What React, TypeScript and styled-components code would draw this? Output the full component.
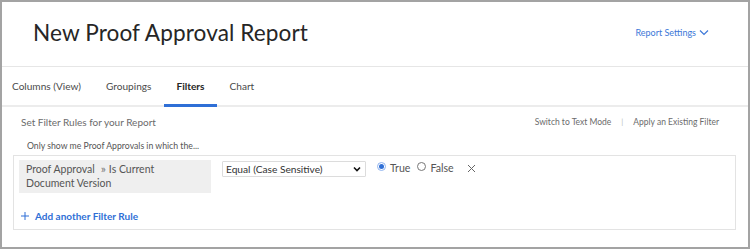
import React from "react";
import styled, { createGlobalStyle } from "styled-components";

const Global = createGlobalStyle`
  html, body { margin: 0; padding: 0; background: #fff; }
  body { font-family: "Lato", "Open Sans", Arial, sans-serif; }
  * { box-sizing: border-box; }
`;

const Frame = styled.div`
  width: 750px;
  height: 249px;
  border: 2px solid #a3a3a3;
  background: #fff;
  display: flex;
  flex-direction: column;
`;

const Header = styled.div`
  height: 65px;
  display: flex;
  align-items: center;
  justify-content: space-between;
  padding: 0 39px 4px 31px;
  border-bottom: 1px solid #e6e6e6;
`;

const Title = styled.h1`
  margin: 0;
  font-size: 22.6px;
  font-weight: 400;
  color: #262626;
  letter-spacing: 0.1px;
`;

const SettingsLink = styled.a`
  display: flex;
  align-items: center;
  gap: 3px;
  font-size: 9px;
  color: #3d78d8;
  cursor: pointer;
`;

const TabBar = styled.div`
  height: 40px;
  display: flex;
  align-items: stretch;
  padding-left: 0;
  border-bottom: 2px solid #ececec;
`;

const Tab = styled.div<{ $active?: boolean }>`
  display: flex;
  align-items: center;
  padding: 0 12.5px;
  margin-bottom: -2px;
  font-size: 10.1px;
  font-weight: ${(p) => (p.$active ? 700 : 400)};
  color: ${(p) => (p.$active ? "#262626" : "#4a4a4a")};
  border-bottom: 3px solid ${(p) => (p.$active ? "#2f6fd6" : "transparent")};
  &:first-child {
    padding-left: 10px;
  }
`;

const Body = styled.div`
  flex: 1;
  display: flex;
  flex-direction: column;
  padding: 7px 12px 0 11px;
`;

const SubHeader = styled.div`
  display: flex;
  justify-content: space-between;
  align-items: center;
  height: 15px;
  padding: 0 17px 0 8px;
`;

const SubTitle = styled.span`
  font-size: 10px;
  color: #6b6b6b;
`;

const Actions = styled.div`
  display: flex;
  align-items: center;
  gap: 10px;
  font-size: 8.5px;
  color: #6b6b6b;
`;

const Sep = styled.span`
  color: #bdbdbd;
  font-size: 8px;
`;

const Hint = styled.div`
  margin: 11px 0 0 14px;
  font-size: 8.7px;
  color: #555;
  height: 12px;
`;

const RuleBox = styled.div`
  margin-top: 3px;
  border: 1px solid #e3e3e3;
  height: 75px;
  padding: 4px 5px 0 5px;
  display: flex;
  flex-direction: column;
`;

const RuleRow = styled.div`
  display: flex;
  align-items: flex-start;
`;

const FieldTag = styled.div`
  width: 192px;
  height: 33px;
  background: #efefef;
  padding: 2px 7px;
  font-size: 10.5px;
  line-height: 14px;
  color: #555;
`;

const Chev = styled.span`
  margin: 0 3px 0 6px;
  color: #777;
  font-size: 12px;
`;

const Select = styled.div`
  margin: 1px 0 0 11px;
  width: 144px;
  height: 16px;
  border: 1px solid #dcdcdc;
  border-radius: 1px;
  display: flex;
  align-items: center;
  justify-content: space-between;
  padding: 0 4px 0 3px;
  font-size: 10.2px;
  color: #333;
`;

const RadioGroup = styled.div`
  display: flex;
  align-items: center;
  margin: 2px 0 0 11px;
  font-size: 10.6px;
  color: #555;
`;

const Radio = styled.span<{ $checked?: boolean }>`
  width: 9px;
  height: 9px;
  border-radius: 50%;
  border: 1px solid ${(p) => (p.$checked ? "#8fb3ef" : "#777")};
  display: inline-flex;
  align-items: center;
  justify-content: center;
  margin-right: 4px;
  margin-top: -3px;
  &::after {
    content: "";
    width: 5px;
    height: 5px;
    border-radius: 50%;
    background: ${(p) => (p.$checked ? "#2f6fd6" : "transparent")};
  }
`;

const RadioLabel = styled.span<{ $gap?: number }>`
  margin-right: ${(p) => p.$gap ?? 0}px;
`;

const Remove = styled.span`
  display: inline-flex;
  margin-left: 0;
`;

const AddRule = styled.div`
  margin: 17px 0 0 2px;
  display: flex;
  align-items: center;
  gap: 6px;
  font-size: 10px;
  font-weight: 700;
  color: #2f6fd6;
`;

export default function App() {
  return (
    <>
      <Global />
      <Frame>
        <Header>
          <Title>New Proof Approval Report</Title>
          <SettingsLink>
            Report Settings
            <svg width="10" height="7" viewBox="0 0 10 7">
              <path d="M1 1.5 L5 5.5 L9 1.5" fill="none" stroke="#3d78d8" strokeWidth="1.2" />
            </svg>
          </SettingsLink>
        </Header>
        <TabBar>
          <Tab>Columns (View)</Tab>
          <Tab>Groupings</Tab>
          <Tab $active>Filters</Tab>
          <Tab>Chart</Tab>
        </TabBar>
        <Body>
          <SubHeader>
            <SubTitle>Set Filter Rules for your Report</SubTitle>
            <Actions>
              <span>Switch to Text Mode</span>
              <Sep>|</Sep>
              <span>Apply an Existing Filter</span>
            </Actions>
          </SubHeader>
          <Hint>Only show me Proof Approvals in which the...</Hint>
          <RuleBox>
            <RuleRow>
              <FieldTag>
                Proof Approval<Chev>»</Chev>Is Current
                <br />
                Document Version
              </FieldTag>
              <Select>
                <span>Equal (Case Sensitive)</span>
                <svg width="8" height="6" viewBox="0 0 8 6">
                  <path d="M1 1.5 L4 4.5 L7 1.5" fill="none" stroke="#111" strokeWidth="1.6" />
                </svg>
              </Select>
              <RadioGroup>
                <Radio $checked />
                <RadioLabel $gap={7}>True</RadioLabel>
                <Radio />
                <RadioLabel $gap={13}>False</RadioLabel>
                <Remove>
                  <svg width="9" height="9" viewBox="0 0 9 9">
                    <path d="M1 1 L8 8 M8 1 L1 8" stroke="#666" strokeWidth="1" />
                  </svg>
                </Remove>
              </RadioGroup>
            </RuleRow>
            <AddRule>
              <svg width="8" height="8" viewBox="0 0 8 8">
                <path d="M4 0 V8 M0 4 H8" stroke="#2f6fd6" strokeWidth="1" />
              </svg>
              Add another Filter Rule
            </AddRule>
          </RuleBox>
        </Body>
      </Frame>
    </>
  );
}
